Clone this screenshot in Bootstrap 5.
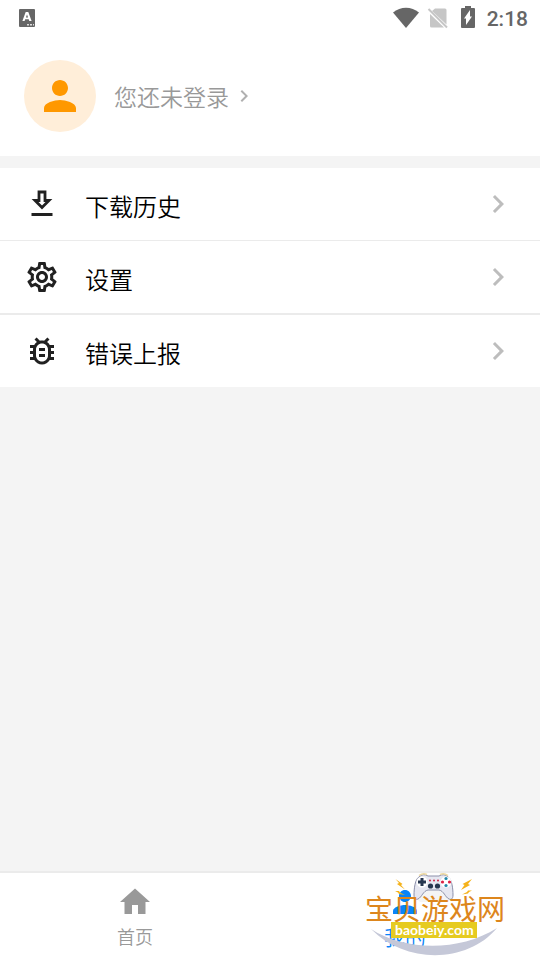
<!DOCTYPE html>
<html lang="zh-CN">
<head>
<meta charset="utf-8">
<meta name="viewport" content="width=device-width, initial-scale=1">
<title>我的</title>
<link href="https://cdn.jsdelivr.net/npm/bootstrap@5.3.0/dist/css/bootstrap.min.css" rel="stylesheet">
<style>
  body { font-family: "Noto Sans CJK SC", sans-serif; background: #f4f4f4; color: #000; }
  svg { display: block; flex: none; }
  .status-bar { height: 36px; padding: 0 12px 0 16px; color: #666; }
  .clock { font: 500 21px/36px Roboto, sans-serif; margin-left: 8px; padding-top: 1px; }
  .profile { padding: 24px; margin-bottom: 12px; }
  .avatar { width: 72px; height: 72px; background: #ffeed9; color: #ff9800; }
  .login-link { margin-left: 18px; font-size: 23px; font-weight: 350; line-height: 36px; color: #999; }
  .menu-list { --bs-list-group-border-color: #ebebeb; --bs-list-group-color: #000; }
  .menu-row { height: 73px; padding: 0 24px; font-size: 24px; font-weight: 350; line-height: 36px; border-width: 0 0 1px; }
  .menu-row + .menu-row { height: 74px; border-bottom-width: 2px; }
  .menu-list .menu-row:last-child { height: 72px; border-bottom-width: 0; }
  .menu-row .title { margin-left: 25px; padding-top: 3px; }
  .glyph { color: #212121; }
  .arrow { color: #bdbdbd; }
  .tabs { border-top: 2px solid #ebebeb; height: 89px; }
  .tab-item { padding: 11px 0 0; font-size: 18px; font-weight: 350; line-height: 27px; color: #999; }
  .tab-item .caption { margin-top: 3px; }
  .tab-item.active { color: #0a84f8; font-size: 21px; }
  .stamp { right: 32px; bottom: 2px; width: 144px; height: 88px; pointer-events: none; }
  .stamp text { font-family: "Noto Sans CJK SC", sans-serif; }
  .stamp .site { font-family: Lato, sans-serif; }
</style>
<script src="https://cdn.jsdelivr.net/npm/bootstrap@5.3.0/dist/js/bootstrap.bundle.min.js"></script>
</head>
<body class="d-flex flex-column min-vh-100">
<header class="status-bar d-flex align-items-center bg-white">
  <svg class="me-auto" width="22" height="22" viewBox="0 0 22 22" aria-hidden="true">
    <rect x="3" y="2" width="16" height="18" rx="1" fill="#666"/>
    <path d="M9.700 5h2.600l3.300 9h-2.300l-.6-1.800H9.200L8.600 14H6.400zM11 7.400l-1.100 3.200h2.200z" fill="#fff" fill-rule="evenodd"/>
    <path d="M11 17h2v1.500h-2zm3 0h2v1.500h-2zm3 0h1v1.500h-1z" fill="#ddd"/>
  </svg>
  <svg width="26" height="22" viewBox="0 0 26 22" aria-hidden="true"><path d="M0 5.500C7.500-.8 18.500-.8 26 5.500L13 21z" fill="#666"/></svg>
  <svg class="ms-2" width="22" height="24" viewBox="0 0 22 24" aria-hidden="true">
    <path d="M8 2.500h10q1.500 0 1.500 1.500v14.500L5 5zM3 8 17 21.500H4.500Q3 21.500 3 20z" fill="#c6c6c6"/>
    <path d="M1.500 3 20 21.500" stroke="#c6c6c6" stroke-width="2"/>
  </svg>
  <svg class="ms-2" width="22" height="24" viewBox="0 0 22 24" aria-hidden="true">
    <path d="M8 0h6v2h3q1 0 1 1v18q0 1-1 1H5q-1 0-1-1V3q0-1 1-1h3z" fill="#666"/>
    <path d="M13 4v6.500h2L9 19v-6.500H7z" fill="#fff"/>
  </svg>
  <span class="clock">2:18</span>
</header>

<section class="profile bg-white d-flex align-items-center">
  <div class="avatar rounded-circle d-flex align-items-center justify-content-center">
    <svg width="48" height="48" viewBox="0 0 24 24" fill="currentColor" aria-hidden="true"><path d="M12 12c2.210 0 4-1.790 4-4s-1.790-4-4-4-4 1.790-4 4 1.790 4 4 4zm0 2c-2.670 0-8 1.340-8 4v2h16v-2c0-2.660-5.330-4-8-4z"/></svg>
  </div>
  <a href="#" class="login-link d-flex align-items-center text-decoration-none">您还未登录
    <svg class="ms-1" width="22" height="24" viewBox="1 0 22 24" fill="#b0b0b0" aria-hidden="true"><path d="M8.590 16.590 13.170 12 8.590 7.410 10 6l6 6-6 6z"/></svg>
  </a>
</section>

<nav class="menu-list list-group list-group-flush">
  <a href="#" class="menu-row list-group-item d-flex align-items-center">
    <svg class="glyph" width="36" height="36" viewBox="0 0 36 36" aria-hidden="true"><path d="M15 6h6v8.500h4L18 21.500l-7-7h4z" fill="none" stroke="currentColor" stroke-width="2.800"/><path d="M7.500 27h21v3h-21z" fill="currentColor"/></svg>
    <span class="title me-auto">下载历史</span>
    <svg class="arrow" width="36" height="36" viewBox="0 0 24 24" fill="currentColor" aria-hidden="true"><path d="M8.590 16.590 13.170 12 8.590 7.410 10 6l6 6-6 6z"/></svg>
  </a>
  <a href="#" class="menu-row list-group-item d-flex align-items-center">
    <svg class="glyph" width="36" height="36" viewBox="0 0 24 24" fill="currentColor" aria-hidden="true"><path d="M19.430 12.980c.04-.32.07-.64.07-.98 0-.34-.03-.66-.07-.98l2.110-1.650c.19-.15.24-.42.12-.64l-2-3.460c-.09-.16-.26-.25-.44-.25-.06 0-.12.010-.17.030l-2.490 1c-.52-.4-1.080-.73-1.690-.98l-.38-2.650C14.460 2.180 14.250 2 14 2h-4c-.25 0-.46.18-.49.42l-.38 2.650c-.61.25-1.170.59-1.690.98l-2.490-1c-.06-.02-.12-.03-.18-.03-.17 0-.34.09-.43.25l-2 3.460c-.13.22-.07.49.12.64l2.110 1.650c-.04.32-.07.65-.07.98 0 .33.03.66.07.98l-2.110 1.650c-.19.15-.24.42-.12.64l2 3.460c.09.16.26.25.44.25.06 0 .12-.01.17-.03l2.490-1c.52.4 1.080.73 1.690.98l.38 2.650c.03.24.24.42.49.42h4c.25 0 .46-.18.49-.42l.38-2.650c.61-.25 1.170-.59 1.690-.98l2.490 1c.06.02.12.03.18.03.17 0 .34-.09.43-.25l2-3.460c.12-.22.07-.49-.12-.64l-2.110-1.650zm-1.980-1.710c.04.31.05.52.05.73 0 .21-.02.43-.05.73l-.14 1.130.89.7 1.080.84-.7 1.210-1.270-.51-1.040-.42-.9.68c-.43.32-.84.56-1.250.73l-1.060.43-.16 1.130-.2 1.350h-1.400l-.19-1.350-.16-1.130-1.060-.43c-.43-.18-.83-.41-1.230-.71l-.91-.7-1.060.43-1.270.51-.7-1.210 1.080-.84.89-.7-.14-1.130c-.03-.31-.05-.54-.05-.74s.02-.43.05-.73l.14-1.130-.89-.7-1.080-.84.7-1.210 1.270.51 1.040.42.9-.68c.43-.32.84-.56 1.250-.73l1.060-.43.16-1.130.2-1.350h1.390l.19 1.350.16 1.130 1.060.43c.43.18.83.41 1.230.71l.91.7 1.060-.43 1.270-.51.7 1.210-1.070.85-.89.7.14 1.130zM12 8c-2.210 0-4 1.790-4 4s1.790 4 4 4 4-1.790 4-4-1.790-4-4-4zm0 6c-1.100 0-2-.9-2-2s.9-2 2-2 2 .9 2 2-.9 2-2 2z"/></svg>
    <span class="title me-auto">设置</span>
    <svg class="arrow" width="36" height="36" viewBox="0 0 24 24" fill="currentColor" aria-hidden="true"><path d="M8.590 16.590 13.170 12 8.590 7.410 10 6l6 6-6 6z"/></svg>
  </a>
  <a href="#" class="menu-row list-group-item d-flex align-items-center">
    <svg class="glyph" width="36" height="36" viewBox="0 0 24 24" fill="currentColor" aria-hidden="true"><path d="M20 8h-2.810c-.45-.78-1.070-1.450-1.820-1.960L17 4.410 15.590 3l-2.170 2.170C12.960 5.060 12.490 5 12 5s-.96.060-1.410.17L8.410 3 7 4.410l1.620 1.630C7.880 6.550 7.260 7.220 6.810 8H4v2h2.090c-.05.33-.09.66-.09 1v1H4v2h2v1c0 .34.04.67.09 1H4v2h2.810c1.040 1.790 2.970 3 5.190 3s4.150-1.210 5.190-3H20v-2h-2.090c.05-.33.09-.66.09-1v-1h2v-2h-2v-1c0-.34-.04-.67-.09-1H20V8zm-4 7c0 2.210-1.790 4-4 4s-4-1.790-4-4v-4c0-2.210 1.790-4 4-4s4 1.790 4 4v4zm-6-1h4v2h-4zm0-4h4v2h-4z"/></svg>
    <span class="title me-auto">错误上报</span>
    <svg class="arrow" width="36" height="36" viewBox="0 0 24 24" fill="currentColor" aria-hidden="true"><path d="M8.590 16.590 13.170 12 8.590 7.410 10 6l6 6-6 6z"/></svg>
  </a>
</nav>

<footer class="mt-auto position-relative">
  <nav class="tabs nav nav-justified bg-white">
    <a href="#" class="tab-item nav-item d-flex flex-column align-items-center text-decoration-none">
      <svg width="36" height="36" viewBox="0 0 24 24" fill="currentColor" aria-hidden="true"><path d="M10 20v-6h4v6h5v-8h3L12 3 2 12h3v8z"/></svg>
      <span class="caption">首页</span>
    </a>
    <a href="#" class="tab-item nav-item active d-flex flex-column align-items-center text-decoration-none" aria-current="page">
      <svg width="36" height="36" viewBox="0 0 24 24" fill="currentColor" aria-hidden="true"><path d="M12 12c2.210 0 4-1.790 4-4s-1.790-4-4-4-4 1.790-4 4 1.790 4 4 4zm0 2c-2.670 0-8 1.340-8 4v2h16v-2c0-2.660-5.330-4-8-4z"/></svg>
      <span class="caption">我的</span>
    </a>
  </nav>
  <svg class="stamp position-absolute" viewBox="364 870 144 88" role="img" aria-label="宝贝游戏网 baobeiy.com">
    <path d="M371 929c34 22 88 23 126-1-30 36-92 36-126 1z" fill="#c5c8d8"/>
    <path d="M416 898c4-8 10-8 18-8s14 0 18 8l-4 4h-28z" fill="#f4f4f4"/>
    <path d="M419 877q4-4 9-1h11q5-3 9 1c4 2 5 12 5 18 0 4-2 5-4 4-4-2-5-8-10-9h-11c-5 1-6 7-10 9-2 1-4 0-4-4 0-6 1-16 5-18z" fill="#e6e7f1" stroke="#8c90aa" stroke-width="1"/>
    <path d="M419 875.500q4-3 8-1m13 0q4-2 8 1" fill="none" stroke="#eed9a0" stroke-width="1.500"/>
    <circle cx="422" cy="882" r="5.500" fill="#fff"/><circle cx="446" cy="882" r="5.500" fill="#fff"/>
    <path d="M420.500 878h3v2.500h2.500v3h-2.500v2.500h-3v-2.500H418v-3h2.500z" fill="#26364f"/>
    <circle cx="430.500" cy="886" r="2.600" fill="#26364f"/><circle cx="437.500" cy="886" r="2.600" fill="#26364f"/>
    <circle cx="430" cy="880.500" r="1" fill="#c24"/><circle cx="434" cy="880.500" r="1" fill="#c24"/><circle cx="438" cy="880.500" r="1" fill="#c24"/>
    <circle cx="446" cy="878.500" r="1.600" fill="#28a"/><circle cx="446" cy="885.500" r="1.600" fill="#28a"/><circle cx="442.500" cy="882" r="1.600" fill="#d24"/><circle cx="449.500" cy="882" r="1.600" fill="#d24"/>
    <path d="m395.500 879 7 5-1.500 1 4 4.500-8-5.500 2-1zm-.5 12h4l1 1.500 5 2.500-6-1-1-1.500zM472 879l-9.500 5 2 1-3.500 5 9-5-2-1zm0 11.500h-4l-1 1.500-5 2.500 6-1 1-1.500z" fill="#f5b21a"/>
    <text x="365" y="920" font-size="28" font-weight="400" fill="#dd861c">宝贝游戏网</text>
    <rect x="391" y="922" width="86" height="16" fill="#e6cb20"/>
    <text class="site" x="395" y="935" font-size="14" font-weight="700" fill="#fff">baobeiy.com</text>
  </svg>
</footer>
</body>
</html>
